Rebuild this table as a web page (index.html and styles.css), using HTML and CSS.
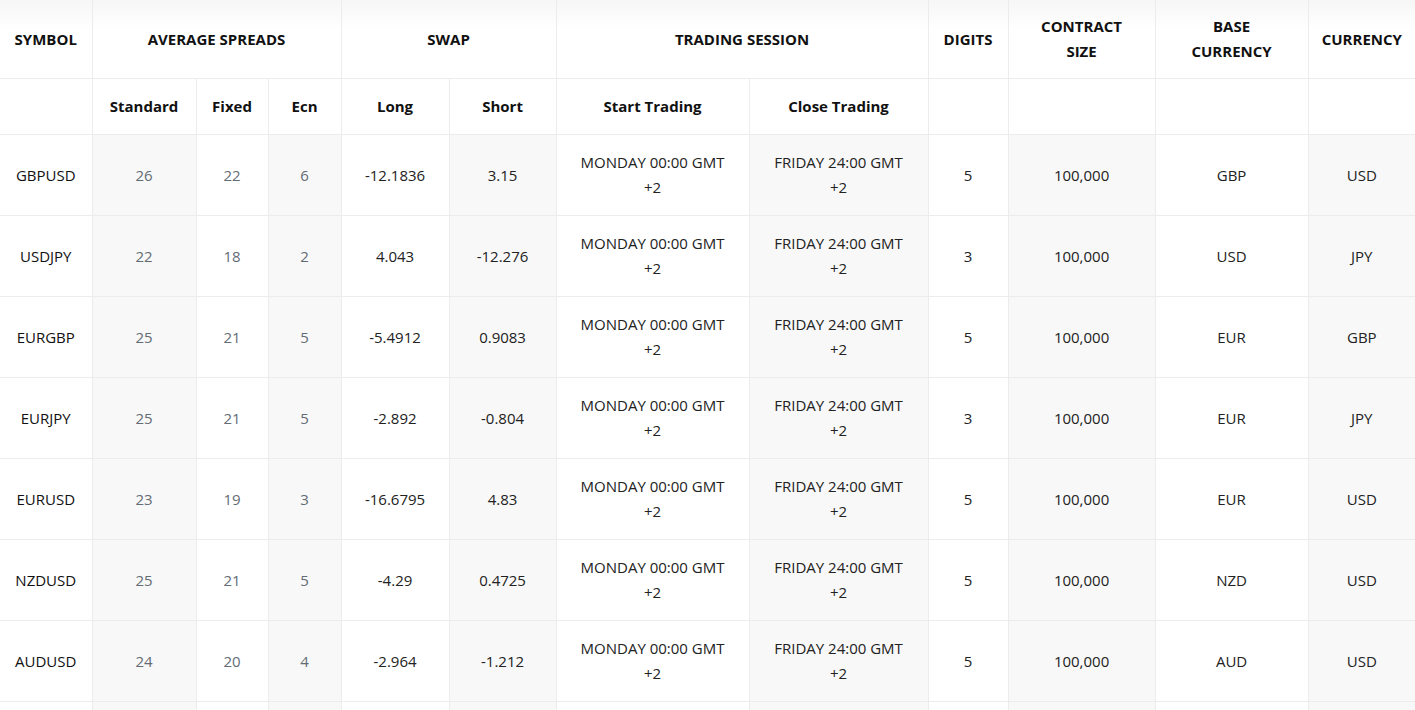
FILE: index.html
```html
<!DOCTYPE html>
<html lang="en">
<head>
<meta charset="utf-8">
<title>Trading Conditions</title>
<link rel="stylesheet" href="styles.css">
</head>
<body>
<table class="specs">
  <colgroup>
    <col class="c-symbol"><col class="c-std"><col class="c-fixed"><col class="c-ecn">
    <col class="c-long"><col class="c-short"><col class="c-start"><col class="c-close">
    <col class="c-digits"><col class="c-contract"><col class="c-base"><col class="c-cur">
  </colgroup>
  <thead>
    <tr class="head-main">
      <th>SYMBOL</th>
      <th colspan="3">AVERAGE SPREADS</th>
      <th colspan="2">SWAP</th>
      <th colspan="2">TRADING SESSION</th>
      <th>DIGITS</th>
      <th>CONTRACT<br>SIZE</th>
      <th>BASE<br>CURRENCY</th>
      <th>CURRENCY</th>
    </tr>
    <tr class="head-sub">
      <th></th>
      <th>Standard</th>
      <th>Fixed</th>
      <th>Ecn</th>
      <th>Long</th>
      <th>Short</th>
      <th>Start Trading</th>
      <th>Close Trading</th>
      <th></th>
      <th></th>
      <th></th>
      <th></th>
    </tr>
  </thead>
  <tbody>
    <tr>
      <td class="sym">GBPUSD</td><td class="sp">26</td><td class="sp">22</td><td class="sp">6</td>
      <td>-12.1836</td><td>3.15</td>
      <td>MONDAY 00:00 GMT<br>+2</td><td>FRIDAY 24:00 GMT<br>+2</td>
      <td>5</td><td>100,000</td><td>GBP</td><td>USD</td>
    </tr>
    <tr>
      <td class="sym">USDJPY</td><td class="sp">22</td><td class="sp">18</td><td class="sp">2</td>
      <td>4.043</td><td>-12.276</td>
      <td>MONDAY 00:00 GMT<br>+2</td><td>FRIDAY 24:00 GMT<br>+2</td>
      <td>3</td><td>100,000</td><td>USD</td><td>JPY</td>
    </tr>
    <tr>
      <td class="sym">EURGBP</td><td class="sp">25</td><td class="sp">21</td><td class="sp">5</td>
      <td>-5.4912</td><td>0.9083</td>
      <td>MONDAY 00:00 GMT<br>+2</td><td>FRIDAY 24:00 GMT<br>+2</td>
      <td>5</td><td>100,000</td><td>EUR</td><td>GBP</td>
    </tr>
    <tr>
      <td class="sym">EURJPY</td><td class="sp">25</td><td class="sp">21</td><td class="sp">5</td>
      <td>-2.892</td><td>-0.804</td>
      <td>MONDAY 00:00 GMT<br>+2</td><td>FRIDAY 24:00 GMT<br>+2</td>
      <td>3</td><td>100,000</td><td>EUR</td><td>JPY</td>
    </tr>
    <tr>
      <td class="sym">EURUSD</td><td class="sp">23</td><td class="sp">19</td><td class="sp">3</td>
      <td>-16.6795</td><td>4.83</td>
      <td>MONDAY 00:00 GMT<br>+2</td><td>FRIDAY 24:00 GMT<br>+2</td>
      <td>5</td><td>100,000</td><td>EUR</td><td>USD</td>
    </tr>
    <tr>
      <td class="sym">NZDUSD</td><td class="sp">25</td><td class="sp">21</td><td class="sp">5</td>
      <td>-4.29</td><td>0.4725</td>
      <td>MONDAY 00:00 GMT<br>+2</td><td>FRIDAY 24:00 GMT<br>+2</td>
      <td>5</td><td>100,000</td><td>NZD</td><td>USD</td>
    </tr>
    <tr>
      <td class="sym">AUDUSD</td><td class="sp">24</td><td class="sp">20</td><td class="sp">4</td>
      <td>-2.964</td><td>-1.212</td>
      <td>MONDAY 00:00 GMT<br>+2</td><td>FRIDAY 24:00 GMT<br>+2</td>
      <td>5</td><td>100,000</td><td>AUD</td><td>USD</td>
    </tr>
    <tr class="tail">
      <td></td><td></td><td></td><td></td><td></td><td></td>
      <td></td><td></td><td></td><td></td><td></td><td></td>
    </tr>
  </tbody>
</table>
</body>
</html>
```

FILE: styles.css
```css
html, body {
  margin: 0;
  padding: 0;
  background: #ffffff;
}

body {
  font-family: "Open Sans", "Liberation Sans", sans-serif;
  color: #1b1b1b;
  overflow: hidden;
}

.specs {
  width: 1415px;
  border-collapse: collapse;
  table-layout: fixed;
  text-align: center;
}

.c-symbol { width: 92px; }
.c-std { width: 104px; }
.c-fixed { width: 72px; }
.c-ecn { width: 73px; }
.c-long { width: 108px; }
.c-short { width: 107px; }
.c-start { width: 193px; }
.c-close { width: 179px; }
.c-digits { width: 80px; }
.c-contract { width: 147px; }
.c-base { width: 153px; }
.c-cur { width: 107px; }

.specs th,
.specs td {
  border: 1px solid #ececec;
  padding: 0 4px;
  vertical-align: middle;
}

.specs tr > :first-child { border-left: none; }
.specs tr > :last-child { border-right: none; }
.head-main th { border-top: none; }

.specs th {
  font-weight: 700;
  font-size: 15px;
  line-height: 25px;
  color: #111111;
}

.head-main th {
  height: 78px;
  background: linear-gradient(to bottom, #f6f6f6 0px, #ffffff 30px);
}

.head-sub th {
  height: 55px;
}

.specs td {
  height: 80px;
  font-size: 15px;
  line-height: 25px;
  font-weight: 400;
  color: #222222;
}

.specs td.sym {
  font-weight: 500;
  color: #111111;
}

.specs td.sp {
  color: #636c75;
}

.specs tbody td:nth-child(even) {
  background: #f8f8f8;
}
```
